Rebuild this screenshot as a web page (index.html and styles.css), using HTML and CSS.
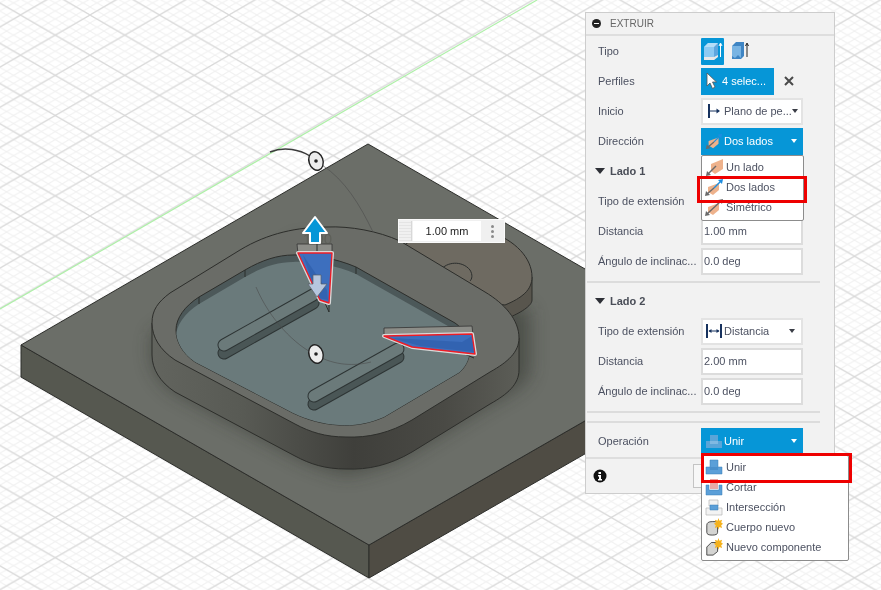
FILE: index.html
```html
<!DOCTYPE html>
<html lang="es">
<head>
<meta charset="utf-8">
<title>Extruir</title>
<link rel="stylesheet" href="styles.css">
</head>
<body>
<svg class="defs" width="0" height="0" aria-hidden="true">
  <defs>
    <symbol id="i-dir" viewBox="0 0 20 18">
      <path class="orange" d="M7 6 L19 1 V11 L11 16 L7 13Z"/>
      <path class="gray-line" d="M4 16 L12 8"/>
      <path class="gray-fill" d="M2 18 L3 13 L7 17Z"/>
    </symbol>
    <symbol id="i-dir2" viewBox="0 0 20 18">
      <path class="orange" d="M4 9 L15 5 V12 L9 17 L4 14Z"/>
      <path class="gray-line" d="M3 16 L10 10"/>
      <path class="gray-fill" d="M1 18 L2 13 L6 17Z"/>
      <path class="blue-line" d="M10 10 L17 3"/>
      <path class="blue-fill" d="M19 1 L18 6 L14 2Z"/>
    </symbol>
    <symbol id="i-dir3" viewBox="0 0 20 18">
      <path class="orange" d="M4 9 L15 5 V12 L9 17 L4 14Z"/>
      <path class="gray-line" d="M3 16 L17 3"/>
      <path class="gray-fill" d="M1 18 L2 13 L6 17Z M19 1 L18 6 L14 2Z"/>
    </symbol>
  </defs>
</svg>

<main class="stage">
  <svg class="scene" width="881" height="590" viewBox="0 0 881 590" role="img" aria-label="Modelo 3D">
    <defs>
      <pattern id="gridMinor" width="13.9" height="8.04" patternUnits="userSpaceOnUse" patternTransform="translate(20.5 15)">
        <path class="grid-minor" d="M0 0L13.9 8.04M0 8.04L13.9 0"/>
      </pattern>
      <pattern id="gridMajor" width="69.5" height="40.2" patternUnits="userSpaceOnUse" patternTransform="translate(20.5 15)">
        <path class="grid-major" d="M0 0L69.5 40.2M0 40.2L69.5 0"/>
      </pattern>
      <linearGradient id="wallGrad" x1="0" x2="1" y1="0" y2="0">
        <stop offset="0" stop-color="#62645e"/>
        <stop offset=".25" stop-color="#585a54"/>
        <stop offset=".55" stop-color="#3f3f3b"/>
        <stop offset=".8" stop-color="#4a4a45"/>
        <stop offset="1" stop-color="#5c5d57"/>
      </linearGradient>
      <filter id="soft" x="-20%" y="-20%" width="140%" height="140%"><feGaussianBlur stdDeviation="9"/></filter>
      <clipPath id="plateClip"><path d="M368 144 L21 345 L369 545 L717 345Z"/></clipPath>
      <clipPath id="pocketClip"><path d="M176 330 C176 318 185 306 199 297 L245 270 C262 260 278 255 293 255 C310 254 335 258 356 267 L455 323 C465 330 470 338 470 347 C470 357 467 365 460 372 L384 417 C368 424 353 426 339 425 C322 424 308 420 293 413 L195 362 C183 354 176 342 176 330Z"/></clipPath>
    </defs>

    <rect class="bg" width="881" height="590"/>
    <rect width="881" height="590" fill="url(#gridMinor)"/>
    <rect width="881" height="590" fill="url(#gridMajor)"/>
    <path class="axis" d="M0 309 L537 0"/>

    <path class="plate-left edge" d="M21 345 V377 L369 578 V545Z"/>
    <path class="plate-right edge" d="M369 545 V578 L717 378 V345Z"/>
    <path class="plate-top edge" d="M368 144 L21 345 L369 545 L717 345Z"/>

    <g clip-path="url(#plateClip)">
      <path class="shadow" filter="url(#soft)" d="M152 335 V355 C152 369 160 382 175 392 L295 456 C310 464 325 469 346 475 C368 470 390 465 412 452 L490 404 C508 394 530 384 530 370 V310 L300 240Z"/>
    </g>

    <path class="tab-wall edge" d="M532 277 V300 C532 306 520 313 508 318 L480 300 L520 270Z"/>
    <path class="tab-top edge" d="M405 245 L420 232 H490 C515 240 532 258 532 277 C532 290 522 298 505 305 L470 300Z"/>
    <path class="thin-dark" d="M441 270 C446 262 462 260 470 270 C473 275 472 279 470 281"/>

    <path class="body-wall edge" fill="url(#wallGrad)" d="M152 323 V355 C152 369 160 382 175 392 L295 456 C310 464 325 469 346 469 C368 470 390 465 412 452 L490 404 C508 394 519 384 519 370 V338Z"/>
    <path class="body-top edge" d="M327 227 C350 226 378 231 400 241 L485 292 C505 304 519 320 519 338 C519 352 508 362 490 372 L412 420 C390 433 368 438 346 437 C325 437 310 432 295 424 L175 360 C160 350 152 337 152 323 C152 310 158 302 170 293 L240 250 C268 233 298 227 327 227Z"/>

    <path class="pocket-wall edge" d="M176 330 C176 318 185 306 199 297 L245 270 C262 260 278 255 293 255 C310 254 335 258 356 267 L455 323 C465 330 470 338 470 347 C470 357 467 365 460 372 L384 417 C368 424 353 426 339 425 C322 424 308 420 293 413 L195 362 C183 354 176 342 176 330Z"/>
    <g clip-path="url(#pocketClip)">
      <path class="floor" transform="translate(0 7)" d="M176 330 C176 318 185 306 199 297 L245 270 C262 260 278 255 293 255 C310 254 335 258 356 267 L455 323 C465 330 470 338 470 347 C470 357 467 365 460 372 L384 417 C368 424 353 426 339 425 C322 424 308 420 293 413 L195 362 C183 354 176 342 176 330Z"/>
    </g>
    <path class="thin-dark" d="M199 297 V304 M245 270 V277 M356 267 V274"/>

    <path class="slot-edge" d="M224 353 L313 303"/>
    <path class="slot-wall" d="M224 353 L313 303"/>
    <path class="slot-edge" d="M224 345 L313 295"/>
    <path class="slot-top" d="M224 345 L313 295"/>
    <path class="slot-edge" d="M314 404 L398 357"/>
    <path class="slot-wall" d="M314 404 L398 357"/>
    <path class="slot-edge" d="M314 396 L398 349"/>
    <path class="slot-top" d="M314 396 L398 349"/>

    <path class="bold-arc" d="M270 152 C285 146 300 150 310 156"/>
    <path class="fine-arc" d="M322 165 C345 180 360 205 373 232"/>
    <path class="fine-arc" d="M256 287 C270 320 295 345 316 355 C335 366 355 366 371 362"/>
    <g class="knob">
      <ellipse cx="316" cy="161" rx="7" ry="9.5" transform="rotate(-18 316 161)"/>
      <circle class="knob-dot" cx="316" cy="161" r="1.8"/>
    </g>
    <g class="knob">
      <ellipse cx="316" cy="354" rx="7" ry="9.5" transform="rotate(-18 316 354)"/>
      <circle class="knob-dot" cx="316" cy="354" r="1.8"/>
    </g>

    <path class="wall-light" d="M297 244 L332 244 L332 254 L298 254Z"/>
    <path class="thin-dark" d="M317 244 V254 M325 303 L329 312 V303"/>
    <path class="halo" d="M298 253 L332 253 L329 303 L320 300Z"/>
    <path class="tri" d="M298 253 L332 253 L329 303 L320 300Z"/>
    <path class="tri-dark" d="M303 255 L318 298 L328 300 L327 290Z"/>
    <path class="red" d="M298 253 L332 253 L329 303 L320 300Z"/>

    <path class="wall-light" d="M384 328 L472 326 L473 335 L384 337Z"/>
    <path class="thin-dark" d="M412 347 L460 352 L474 358"/>
    <path class="halo" d="M384 336 L472 334 L475 354 L412 347Z"/>
    <path class="tri" d="M384 336 L472 334 L475 354 L412 347Z"/>
    <path class="tri-dark" d="M392 338 L462 342 L472 336 L474 352 L420 346Z"/>
    <path class="red" d="M384 336 L472 334 L475 354 L412 347Z"/>

    <text class="ghost" x="303" y="244">1.00</text>
    <path class="arrow-up" d="M315 217 L327 233 H320 V243 H310 V233 H303Z"/>
    <path class="arrow-down" d="M313 275 H321 V284 H327 L317 297 L308 284 H313Z"/>
  </svg>

  <aside class="panel">
    <header class="panel-head">
      <span class="collapse"></span>
      <span class="panel-title">EXTRUIR</span>
    </header>

    <div class="row">
      <span class="label">Tipo</span>
      <span class="type-btn type-on">
        <svg width="22" height="24" viewBox="0 0 22 24"><path class="cube-side" d="M2 8 L6 4 H16 V17 L12 21 H2Z"/><path class="cube-front" d="M2 8 H12 V18 H2Z"/><path class="cube-top" d="M2 8 L6 4 H16 L12 8Z"/><path class="cube-base" d="M2 18 H12 L16 16 V18 L12 21 H2Z"/><path class="white-line" d="M18.5 18 V5 M17 7 L18.5 4 L20 7"/></svg>
      </span>
      <span class="type-btn">
        <svg width="22" height="24" viewBox="0 0 22 24"><path class="thin-side" d="M3 7 L7 3 H15 V17 L12 20 H3Z"/><path class="thin-front" d="M3 7 H12 V19 L9 16 L6 19 L3 17Z"/><path class="dark-line" d="M18 18 V5 M16.5 7 L18 4 L19.5 7"/></svg>
      </span>
    </div>

    <div class="row">
      <span class="label">Perfiles</span>
      <span class="ctl ctl-blue ctl-short">
        <svg class="ic ic-cursor" width="12" height="18" viewBox="0 0 12 18"><path class="cursor" d="M2 1 V14 L5 11 L7.5 16.5 L10 15 L7.5 10 H11.5Z"/></svg>
        <span class="ctl-text">4 selec...</span>
      </span>
      <svg class="clear" width="10" height="10" viewBox="0 0 10 10"><path d="M1 1L9 9M9 1L1 9"/></svg>
    </div>

    <div class="row">
      <span class="label">Inicio</span>
      <span class="ctl ctl-sel">
        <svg class="ic" width="18" height="18" viewBox="-2 0 18 18"><path class="navy-thick" d="M2 2 V16"/><path class="navy-thin" d="M3 9 H11"/><path class="navy-fill" d="M13 9 L9.5 6.5 V11.5Z"/></svg>
        <span class="ctl-text">Plano de pe...</span>
        <span class="caret"></span>
      </span>
    </div>

    <div class="row">
      <span class="label">Dirección</span>
      <span class="ctl ctl-blue">
        <svg class="ic" width="18" height="18" viewBox="0 0 20 18"><use href="#i-dir2"/></svg>
        <span class="ctl-text">Dos lados</span>
        <span class="caret caret-white"></span>
      </span>
    </div>

    <div class="row row-section"><span class="tri-down"></span><span class="section">Lado 1</span></div>
    <div class="row"><span class="label">Tipo de extensión</span></div>
    <div class="row"><span class="label">Distancia</span><span class="ctl ctl-input">1.00 mm</span></div>
    <div class="row"><span class="label">Ángulo de inclinac...</span><span class="ctl ctl-input">0.0 deg</span></div>

    <div class="sep"></div>

    <div class="row row-section"><span class="tri-down"></span><span class="section">Lado 2</span></div>
    <div class="row">
      <span class="label">Tipo de extensión</span>
      <span class="ctl ctl-sel">
        <svg class="ic" width="18" height="18" viewBox="0 0 18 18"><path class="navy-thick" d="M2 2 V16 M16 2 V16"/><path class="navy-thin" d="M4 9 H14"/><path class="navy-fill" d="M3.5 9 L6.5 7 V11Z M14.5 9 L11.5 7 V11Z"/></svg>
        <span class="ctl-text">Distancia</span>
        <span class="caret"></span>
      </span>
    </div>
    <div class="row"><span class="label">Distancia</span><span class="ctl ctl-input">2.00 mm</span></div>
    <div class="row"><span class="label">Ángulo de inclinac...</span><span class="ctl ctl-input">0.0 deg</span></div>

    <div class="sep"></div>
    <div class="sep sep-second"></div>

    <div class="row">
      <span class="label">Operación</span>
      <span class="ctl ctl-blue">
        <svg class="ic" width="18" height="18" viewBox="0 0 18 18"><path class="op-pale" d="M1 9 H5 V3 H13 V9 H17 V16 H1Z"/><path class="op-paler" d="M5 9 H13 V12 H5Z"/></svg>
        <span class="ctl-text">Unir</span>
        <span class="caret caret-white"></span>
      </span>
    </div>

    <footer class="panel-foot">
      <svg width="14" height="14" viewBox="0 0 14 14"><circle class="info-bg" cx="7" cy="7" r="6.5"/><path class="info-mark" d="M5.5 3 H8 V5 H5.5Z M5 6 H8 V10 H9 V11.5 H5 V10 H6 V7.5 H5Z"/></svg>
      <span class="ok-btn"></span>
    </footer>
  </aside>

  <ul class="menu menu-dir">
    <li class="menu-item"><svg width="20" height="18" viewBox="0 0 20 18"><use href="#i-dir"/></svg><span>Un lado</span></li>
    <li class="menu-item"><svg width="20" height="18" viewBox="0 0 20 18"><use href="#i-dir2"/></svg><span>Dos lados</span></li>
    <li class="menu-item"><svg width="20" height="18" viewBox="0 0 20 18"><use href="#i-dir3"/></svg><span>Simétrico</span></li>
  </ul>

  <ul class="menu menu-op">
    <li class="menu-item"><svg width="20" height="18" viewBox="0 0 18 18"><path class="op-blue" d="M1 9 H5 V2 H13 V9 H17 V16 H1Z"/><path class="op-mid" d="M5 9 H13 V12 H5Z"/></svg><span>Unir</span></li>
    <li class="menu-item"><svg width="20" height="18" viewBox="0 0 18 18"><path class="op-blue" d="M1 7 H4 V12 H14 V7 H17 V17 H1Z"/><path class="op-pink" d="M5 1 H13 V11 H5Z"/></svg><span>Cortar</span></li>
    <li class="menu-item"><svg width="20" height="18" viewBox="0 0 18 18"><path class="op-white" d="M4 2 H13 V8 H4Z"/><path class="op-white" d="M1 10 H17 V17 H1Z"/><path class="op-blue" d="M5 7 H13 V12 H5Z"/></svg><span>Intersección</span></li>
    <li class="menu-item"><svg width="20" height="18" viewBox="0 0 20 20"><path class="newbody" d="M2 8 Q2 4 8 4 H14 V16 Q14 19 8 19 Q2 19 2 16Z"/><path class="star" d="M15 0 L16 3 L19 2 L18 5 L20 6.5 L18 8 L19 11 L16 10 L15 13 L14 10 L11 11 L12 8 L10 6.5 L12 5 L11 2 L14 3Z"/></svg><span>Cuerpo nuevo</span></li>
    <li class="menu-item"><svg width="20" height="18" viewBox="0 0 20 20"><path class="newbody" d="M2 10 L7 5 H14 V15 L9 19 H2Z"/><path class="star" d="M15 0 L16 3 L19 2 L18 5 L20 6.5 L18 8 L19 11 L16 10 L15 13 L14 10 L11 11 L12 8 L10 6.5 L12 5 L11 2 L14 3Z"/></svg><span>Nuevo componente</span></li>
  </ul>

  <div class="dim">
    <span class="dim-grip"></span>
    <span class="dim-input">1.00 mm</span>
    <span class="dim-dots"><i></i><i></i><i></i></span>
  </div>

  <div class="mark mark-dir"></div>
  <div class="mark mark-op"></div>
</main>
</body>
</html>
```

FILE: styles.css
```css
* { box-sizing: border-box; }
html, body { margin: 0; padding: 0; }
body { width: 881px; height: 590px; overflow: hidden; background: #fff; font-family: "Liberation Sans", Arial, sans-serif; }
.defs { position: absolute; }

.stage { position: relative; width: 881px; height: 590px; overflow: hidden; filter: blur(0.35px); }
.scene { position: absolute; left: 0; top: 0; display: block; }

/* canvas */
.bg { fill: #fff; }
.grid-minor { stroke: #f1f1f1; stroke-width: 1; fill: none; }
.grid-major { stroke: #d9d9d9; stroke-width: 1.1; fill: none; }
.axis { stroke: #aef0a8; stroke-width: 1.2; fill: none; }
.edge { stroke: #2d2e2b; stroke-width: 1; stroke-linejoin: round; }
.plate-top { fill: #6b6e68; }
.plate-left { fill: #565850; }
.plate-right { fill: #4f4c44; }
.shadow { fill: #33342f; opacity: .55; }
.tab-top { fill: #6e6a61; }
.tab-wall { fill: #58554d; }
.body-top { fill: #6a6c67; }
.pocket-wall { fill: #4c5859; }
.floor { fill: #6a7a7b; }
.thin-dark { stroke: #2b2e2d; stroke-width: 1; fill: none; }
.slot-edge { stroke: #2e3535; stroke-width: 13; stroke-linecap: round; fill: none; }
.slot-wall { stroke: #4a5656; stroke-width: 11; stroke-linecap: round; fill: none; }
.slot-top { stroke: #6b7a7a; stroke-width: 11; stroke-linecap: round; fill: none; }
.fine-arc { stroke: #4a4a4a; stroke-width: .8; fill: none; opacity: .7; }
.bold-arc { stroke: #3c3c3c; stroke-width: 1.4; fill: none; }
.knob ellipse { fill: #ececec; stroke: #222; stroke-width: 1.4; }
.knob-dot { fill: #222; }
.wall-light { fill: #8c8d88; stroke: #333; stroke-width: .8; }
.halo { fill: none; stroke: #d9d9d9; stroke-width: 4; stroke-linejoin: round; }
.tri { fill: #3d6fbe; }
.tri-dark { fill: #2a5aa6; opacity: .55; }
.red { fill: none; stroke: #ee1c25; stroke-width: 1.4; stroke-linejoin: round; }
.ghost { font: 15px "Liberation Sans", Arial, sans-serif; fill: #55574f; opacity: .55; }
.arrow-up { fill: #0696d7; stroke: #fff; stroke-width: 2; stroke-linejoin: round; }
.arrow-down { fill: #b6c6de; stroke: #5a6068; stroke-width: .7; }

/* panel */
.panel { position: absolute; left: 585px; top: 12px; width: 250px; height: 482px; background: #f2f2f2; border: 1px solid #cdcdcd; color: #4c5161; font-size: 11px; }
.panel-head { display: flex; align-items: center; gap: 9px; height: 23px; padding-left: 6px; border-bottom: 2px solid #dedede; }
.collapse { position: relative; width: 9px; height: 9px; border-radius: 50%; background: #222; flex: none; }
.collapse::after { content: ""; position: absolute; left: 2px; right: 2px; top: 4px; height: 1px; background: #fff; }
.panel-title { color: #666; font-size: 10px; }

.row { display: flex; align-items: center; height: 30px; padding-left: 12px; }
.label { width: 103px; flex: none; white-space: nowrap; }
.row-section { padding-left: 9px; }
.tri-down { width: 0; height: 0; border-left: 5px solid transparent; border-right: 5px solid transparent; border-top: 6px solid #2d2f36; margin-right: 5px; }
.section { font-weight: 700; color: #4a4e58; }

.type-btn { display: flex; align-items: center; justify-content: center; width: 23px; height: 27px; margin-right: 4px; border-radius: 1px; }
.type-on { background: #0696d7; }

.ctl { display: flex; align-items: center; width: 102px; height: 27px; flex: none; padding: 0 4px; white-space: nowrap; }
.ctl-blue { background: #0696d7; color: #fff; }
.ctl-short { width: 73px; }
.ctl-sel { background: #fff; border: 2px solid #e3e3e3; padding-left: 2px; }
.ctl-input { background: #fff; border: 2px solid #dcdcdc; padding-left: 1px; }
.ctl-text { margin-left: 1px; flex: 1; }
.ic { flex: none; }
.ic-cursor { margin-right: 4px; }
.caret { width: 0; height: 0; border-left: 3.5px solid transparent; border-right: 3.5px solid transparent; border-top: 4px solid #3a3d46; margin-right: 2px; flex: none; }
.caret-white { border-top-color: #fff; }
.clear { margin-left: 10px; stroke: #4a4a4a; stroke-width: 2; fill: none; }

.sep { height: 2px; margin: 5px 14px 3px 1px; background: #dcdcdc; }
.sep-second { margin-top: 8px; }

.panel-foot { position: relative; height: 34px; margin-top: 1px; padding: 2px 0 0 7px; border-top: 2px solid #dedede; display: flex; align-items: center; }
.ok-btn { position: absolute; left: 107px; top: 5px; width: 64px; height: 24px; background: #f7f7f7; border: 1px solid #c4c4c4; }
.info-bg { fill: #111; }
.info-mark { fill: #fff; }

/* icons */
.orange { fill: #eeb28c; }
.gray-line { stroke: #6a6a6a; stroke-width: 1.4; fill: none; }
.gray-fill { fill: #6a6a6a; }
.blue-line { stroke: #1f8de0; stroke-width: 1.4; fill: none; }
.blue-fill { fill: #1f8de0; }
.cube-side { fill: #5ea6de; }
.cube-front { fill: #8ccaf3; }
.cube-top { fill: #b4def8; }
.cube-base { fill: #e8e8e8; }
.white-line { stroke: #fff; stroke-width: 1; fill: none; }
.thin-side { fill: #3f85c4; }
.thin-front { fill: #79b4e3; }
.dark-line { stroke: #222; stroke-width: 1; fill: none; }
.cursor { fill: #fff; stroke: #555; stroke-width: .8; }
.navy-thick { stroke: #17325e; stroke-width: 2; fill: none; }
.navy-thin { stroke: #17325e; stroke-width: 1; fill: none; }
.navy-fill { fill: #17325e; }
.op-pale { fill: #5aa5d8; }
.op-paler { fill: #7fb9e2; }
.op-blue { fill: #5b9fd8; stroke: #3b7db5; stroke-width: .5; }
.op-mid { fill: #4a8fcb; }
.op-pink { fill: #e8aaa8; }
.op-white { fill: #f3f3f3; stroke: #b5b5b5; stroke-width: .7; }
.newbody { fill: #d4d4d2; stroke: #3d3d3d; stroke-width: 1; }
.star { fill: #f5b21d; }

/* menus */
.menu { position: absolute; margin: 0; padding: 1px 0 3px; list-style: none; background: #fff; border: 1px solid #8c8c8c; border-radius: 2px; color: #4c5161; font-size: 11px; }
.menu-dir { left: 701px; top: 155px; width: 103px; }
.menu-op { left: 701px; top: 455px; width: 148px; }
.menu-item { display: flex; align-items: center; gap: 2px; height: 20px; padding-left: 2px; white-space: nowrap; }

.dim { position: absolute; left: 398px; top: 219px; width: 107px; height: 24px; display: flex; align-items: center; background: #f0f0f0; border: 1px solid #fafafa; }
.dim-grip { width: 13px; height: 20px; flex: none; border-right: 1px solid #d8d8d8; background: repeating-linear-gradient(0deg, #e4e4e4 0 1px, #f0f0f0 1px 3px); }
.dim-input { width: 68px; height: 20px; margin-left: 1px; background: #fff; color: #222; font-size: 11px; text-align: center; line-height: 20px; }
.dim-dots { display: flex; flex-direction: column; align-items: center; gap: 2px; flex: 1; }
.dim-dots i { width: 3px; height: 3px; border-radius: 50%; background: #8a8a8a; }

.mark { position: absolute; border: 3px solid #ee0000; }
.mark-dir { left: 697px; top: 176px; width: 110px; height: 27px; }
.mark-op { left: 701px; top: 453px; width: 151px; height: 30px; }
```
